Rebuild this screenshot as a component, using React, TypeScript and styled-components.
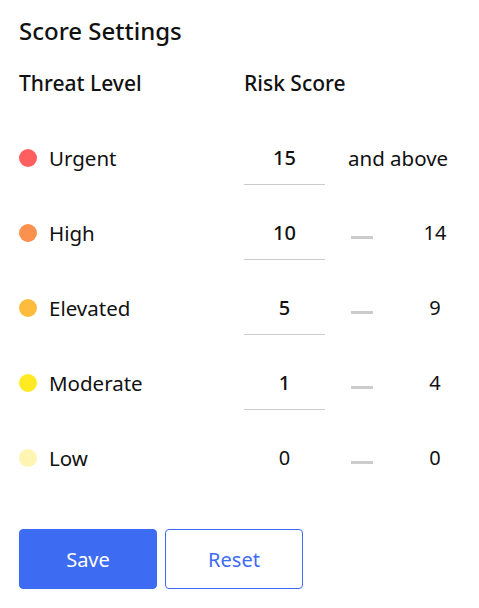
import React from "react";
import styled, { createGlobalStyle } from "styled-components";

const Global = createGlobalStyle`
  html, body { margin: 0; padding: 0; background: #fff; }
  body { font-family: "Noto Sans", "Open Sans", sans-serif; color: #111; }
`;

const Page = styled.div`
  padding: 15px 19px;
  width: 479px;
  box-sizing: border-box;
`;

const Title = styled.h1`
  margin: 0;
  font-size: 24px;
  line-height: 32px;
  font-weight: 500;
  color: #111;
`;

const HeaderRow = styled.div`
  display: flex;
  margin-top: 21px;
  margin-bottom: 22px;
  height: 30px;
  align-items: center;
`;

const HeaderCell = styled.div<{ $w?: number }>`
  flex: none;
  width: ${(p) => (p.$w ? `${p.$w}px` : "auto")};
  font-size: 21px;
  font-weight: 500;
  line-height: 30px;
`;

const Row = styled.div`
  display: flex;
  align-items: center;
  height: 75px;
`;

const LabelCell = styled.div`
  flex: none;
  width: 225px;
  display: flex;
  align-items: center;
  gap: 12px;
  font-size: 20.5px;
  font-weight: 400;
`;

const Dot = styled.span<{ $c: string }>`
  width: 18px;
  height: 18px;
  border-radius: 50%;
  background: ${(p) => p.$c};
  flex: none;
`;

const InputCell = styled.div<{ $line: boolean }>`
  flex: none;
  width: 81px;
  height: 54px;
  padding-top: 1px;
  box-sizing: border-box;
  display: flex;
  align-items: center;
  justify-content: center;
  font-size: 20px;
  font-weight: ${(p) => (p.$line ? 500 : 400)};
  border-bottom: ${(p) => (p.$line ? "1px solid #cccccc" : "1px solid transparent")};
`;

const Dash = styled.span`
  flex: none;
  width: 22px;
  height: 3px;
  background: #cccccc;
  margin-left: 26px;
  margin-top: 10px;
`;

const MaxValue = styled.span`
  flex: none;
  width: 60px;
  margin-left: 32px;
  text-align: center;
  font-size: 20px;
  font-weight: 400;
`;

const Above = styled.span`
  margin-left: 23px;
  font-size: 20.5px;
  font-weight: 400;
  white-space: nowrap;
`;

const Buttons = styled.div`
  display: flex;
  gap: 8px;
  margin-top: 34px;
`;

const Button = styled.button<{ $primary?: boolean }>`
  width: 138px;
  height: 60px;
  border-radius: 4px;
  font-family: "Noto Sans", "Open Sans", sans-serif;
  font-size: 20px;
  font-weight: 400;
  cursor: pointer;
  border: 1px solid #3d6cf2;
  background: ${(p) => (p.$primary ? "#3d6cf2" : "#fff")};
  color: ${(p) => (p.$primary ? "#fff" : "#3d6cf2")};
`;

type Level = { name: string; color: string; min: number; max?: number; editable: boolean };

const levels: Level[] = [
  { name: "Urgent", color: "#ff5f5f", min: 15, editable: true },
  { name: "High", color: "#fa914f", min: 10, max: 14, editable: true },
  { name: "Elevated", color: "#ffbb3d", min: 5, max: 9, editable: true },
  { name: "Moderate", color: "#ffea24", min: 1, max: 4, editable: true },
  { name: "Low", color: "#fff5b3", min: 0, max: 0, editable: false },
];

export default function App() {
  return (
    <Page>
      <Global />
      <Title>Score Settings</Title>
      <HeaderRow>
        <HeaderCell $w={225}>Threat Level</HeaderCell>
        <HeaderCell>Risk Score</HeaderCell>
      </HeaderRow>
      {levels.map((l) => (
        <Row key={l.name}>
          <LabelCell>
            <Dot $c={l.color} />
            {l.name}
          </LabelCell>
          <InputCell $line={l.editable}>{l.min}</InputCell>
          {l.max === undefined ? (
            <Above>and above</Above>
          ) : (
            <>
              <Dash />
              <MaxValue>{l.max}</MaxValue>
            </>
          )}
        </Row>
      ))}
      <Buttons>
        <Button $primary>Save</Button>
        <Button>Reset</Button>
      </Buttons>
    </Page>
  );
}
